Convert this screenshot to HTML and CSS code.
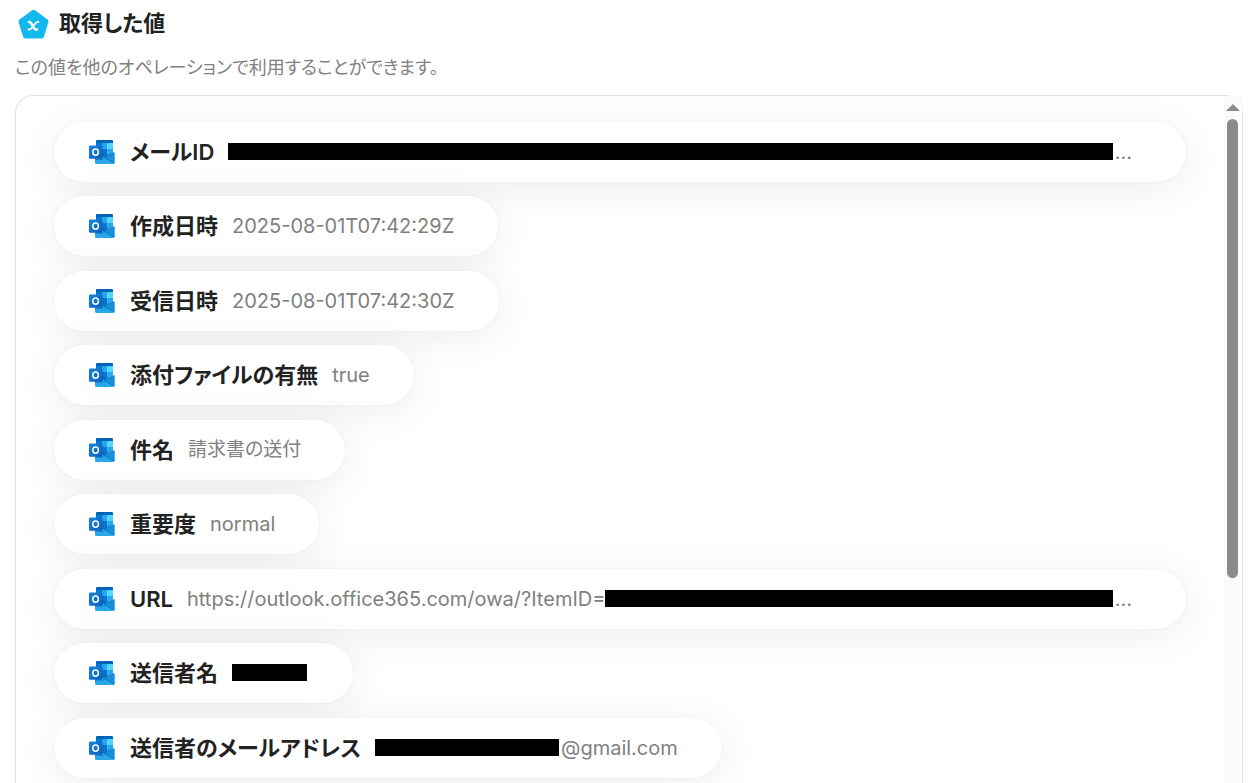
FILE: index.html
```html
<!DOCTYPE html>
<html lang="ja">
<head>
<meta charset="utf-8">
<meta name="viewport" content="width=device-width, initial-scale=1">
<title>取得した値</title>
<link rel="stylesheet" href="styles.css">
</head>
<body>
<svg class="symbols" aria-hidden="true">
  <linearGradient id="badge" x1="0" y1="0" x2="1" y2="1"><stop offset="0" stop-color="#1784d9"/><stop offset="1" stop-color="#0a5fc4"/></linearGradient>
  <symbol id="outlook" viewBox="0 0 26 24">
    <path fill="#0364b8" d="M8 0h15a1 1 0 0 1 1 1v3H7V1a1 1 0 0 1 1-1z"/>
    <path fill="#0078d4" d="M7 3h6v13H7z"/>
    <path fill="#28a8ea" d="M13 3h5.500v6H13z"/>
    <path fill="#50d9ff" d="M18.500 3H24v6h-5.500z"/>
    <path fill="#0078d4" d="M13 9h5.500v6H13z"/>
    <path fill="#28a8ea" d="M18.500 9H24v6h-5.500z"/>
    <path fill="#28a8ea" d="M6 14h19.500v9a1 1 0 0 1-1 1h-17A1.500 1.500 0 0 1 6 22.500z"/>
    <path fill="#0f6fc0" d="M12 13.500h6.500V15L15.500 17.500 12 16z"/>
    <path fill="#1490df" d="M25.500 12.500V23L15 17.700z"/>
    <path fill="none" stroke="#1272bd" stroke-width=".8" d="M25.500 12.500 15 17.700l10.200 5.200"/>
    <path fill="#0a5fa8" opacity=".45" d="M6 6h7.200c.6 0 1 .4 1 1v12c0 .7-.4 1-1 1H6z"/>
    <rect y="5.500" width="13.200" height="13.200" rx="1" fill="url(#badge)"/>
    <ellipse cx="6.600" cy="12.100" rx="2.800" ry="3.200" fill="none" stroke="#fff" stroke-width="1.500"/>
  </symbol>
</svg>
<main class="page">
  <header class="heading">
    <svg class="heading-icon" viewBox="0 0 32 32" aria-hidden="true">
      <path fill="#12b9ec" stroke="#12b9ec" stroke-width="5" stroke-linejoin="round" d="M16.500 5.300 29 14.500 24.500 29h-16L4 14.500z"/>
      <path fill="none" stroke="#fff" stroke-width="2.500" stroke-linecap="round" d="M12 15c3.500-.6 3.500 8.500 8 7.500"/>
      <path fill="none" stroke="#fff" stroke-width="1.800" stroke-linecap="round" d="M21.400 15c-3.900-.9-5.900 8.400-9.900 7.500"/>
    </svg>
    <h1 class="title">取得した値</h1>
  </header>
  <p class="description">この値を他のオペレーションで利用することができます。</p>
  <section class="panel">
    <ul class="values">
      <li class="value-item wide"><svg class="app-icon"><use href="#outlook"/></svg><span class="label">メールID</span><span class="value"><span class="redacted fill"></span>...</span></li>
      <li class="value-item"><svg class="app-icon"><use href="#outlook"/></svg><span class="label">作成日時</span><span class="value">2025-08-01T07:42:29Z</span></li>
      <li class="value-item"><svg class="app-icon"><use href="#outlook"/></svg><span class="label">受信日時</span><span class="value">2025-08-01T07:42:30Z</span></li>
      <li class="value-item"><svg class="app-icon"><use href="#outlook"/></svg><span class="label">添付ファイルの有無</span><span class="value">true</span></li>
      <li class="value-item"><svg class="app-icon"><use href="#outlook"/></svg><span class="label">件名</span><span class="value value-ja">請求書の送付</span></li>
      <li class="value-item"><svg class="app-icon"><use href="#outlook"/></svg><span class="label">重要度</span><span class="value">normal</span></li>
      <li class="value-item wide"><svg class="app-icon"><use href="#outlook"/></svg><span class="label">URL</span><span class="value">https://outlook.office365.com/owa/?ItemID=<span class="redacted fill"></span>...</span></li>
      <li class="value-item"><svg class="app-icon"><use href="#outlook"/></svg><span class="label">送信者名</span><span class="value"><span class="redacted name"></span></span></li>
      <li class="value-item"><svg class="app-icon"><use href="#outlook"/></svg><span class="label">送信者のメールアドレス</span><span class="value"><span class="redacted address"></span>@gmail.com</span></li>
    </ul>
    <div class="scrollbar" aria-hidden="true">
      <span class="scroll-up"></span>
      <span class="scroll-thumb"></span>
    </div>
  </section>
</main>
</body>
</html>
```
FILE: styles.css
```css
* { box-sizing: border-box; }
body {
  margin: 0;
  background: #fff;
  color: #222;
  font-family: Inter, "Noto Sans CJK JP", sans-serif;
  font-feature-settings: "palt";
  overflow: hidden;
}
.symbols { position: absolute; width: 0; height: 0; }
.page {
  display: flex;
  flex-direction: column;
  height: 100vh;
  padding: 7px 9px 0 15px;
}
.heading { display: flex; align-items: center; gap: 10px; padding-left: 2px; height: 32px; }
.heading-icon { width: 32px; height: 32px; overflow: visible; }
.title { margin: 0; font-size: 22px; line-height: 32px; font-weight: 600; }
.description { margin: 16px 0 15px; color: #808080; font-size: 18px; line-height: 25px; }
.panel {
  flex: 1;
  min-height: 0;
  display: flex;
  border: 1px solid #e2e2e2;
  border-bottom: 0;
  border-radius: 18px 18px 0 0;
}
.values {
  flex: 1;
  min-width: 0;
  display: flex;
  flex-direction: column;
  align-items: flex-start;
  gap: 14px;
  margin: 0;
  padding: 26px 37px 26px 38px;
  list-style: none;
  overflow: hidden;
  border-radius: 18px 0 0 0;
}
.value-item {
  display: flex;
  flex-shrink: 0;
  align-items: center;
  height: 60px;
  max-width: 100%;
  padding: 0 44px 1px 35px;
  border-radius: 30px;
  background: #fff;
  box-shadow: 0 6px 40px rgba(0, 0, 0, .08), 0 0 2px rgba(0, 0, 0, .06);
  white-space: nowrap;
}
.value-item:nth-child(even) { margin-bottom: 1px; }
.wide { width: 100%; padding-right: 54px; }
.app-icon { flex: none; width: 26px; height: 24px; margin-right: 15px; }
.label { margin-right: 14px; font-size: 22px; line-height: 32px; font-weight: 600; }
.value { display: flex; align-items: center; color: #808080; font-size: 20px; line-height: 28px; }
.value-ja { font-size: 19px; }
.wide .value { flex: 1; min-width: 0; }
.redacted { flex: none; height: 17px; margin-right: 2px; background: #000; }
.fill { flex: 1; }
.name { width: 75px; }
.address { width: 184px; }
.scrollbar {
  flex: none;
  display: flex;
  flex-direction: column;
  align-items: center;
  width: 19px;
  background: #fbfbfb;
}
.scroll-up {
  margin-top: 8px;
  border: 7px solid transparent;
  border-top: 0;
  border-bottom-color: #8b8b8b;
}
.scroll-thumb { width: 11px; height: 459px; margin-top: 8px; border-radius: 6px; background: #8b8b8b; }
```
